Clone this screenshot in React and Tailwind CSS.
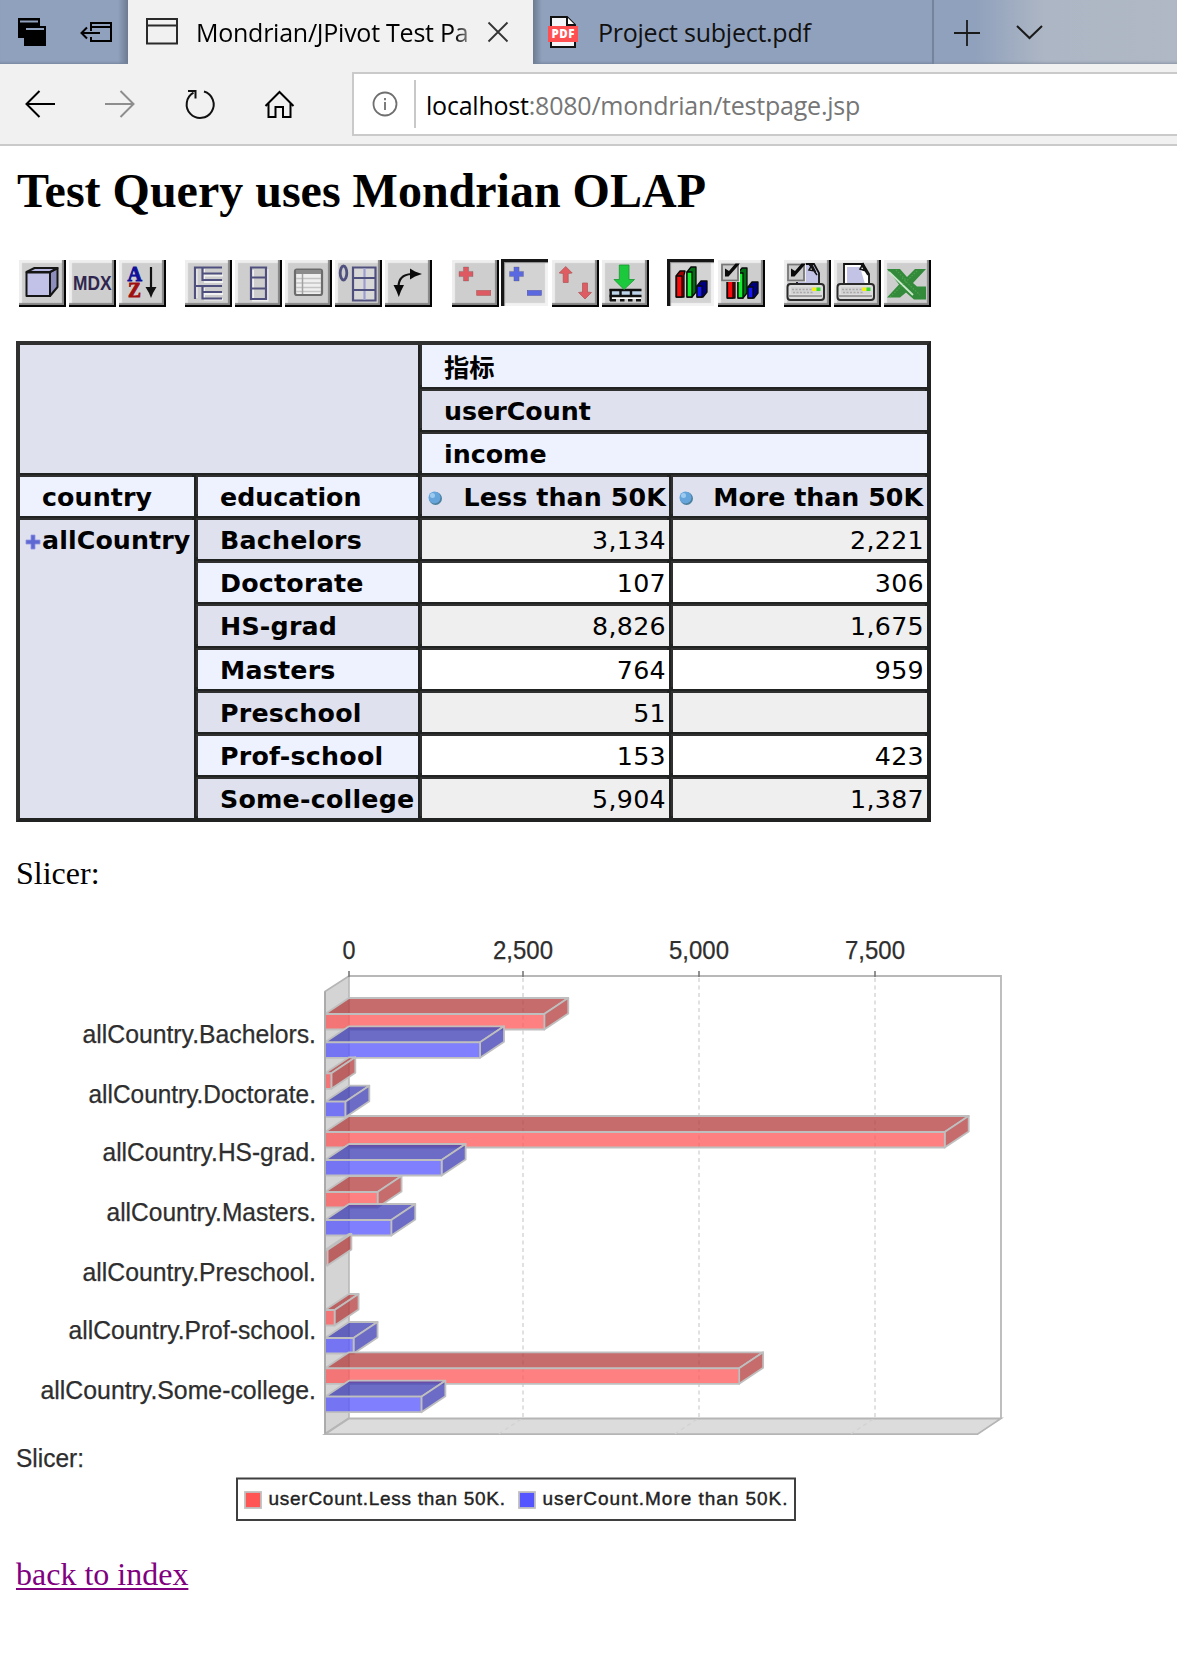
import React from "react";

const SEGOE = "font-['Open_Sans','Noto_Sans',sans-serif]";

function Bevel({ pressed, children }) {
  const look = pressed
    ? "bg-[#d3d3d3] shadow-[inset_3px_3px_0_#161616,inset_4px_4px_1px_#8a8a8a,inset_-3px_-3px_1px_#f2f2f2] -ml-px mr-px -mt-px mb-px"
    : "bg-[#cecece] shadow-[inset_-2px_-2px_0_#050505,inset_-4px_-4px_1px_#858585,inset_3px_3px_1px_#eeeeee]";
  return (
    <button className={`block w-[47px] h-[47px] ${look}`}>
      <svg width="47" height="47" viewBox="0 0 47 47" className="block">
        {children}
      </svg>
    </button>
  );
}

const NAVY = "#50507f";

function Plus({ x, y, fill }) {
  return (
    <path
      d={`M${x - 2.6} ${y - 7}h5.2v4.4h4.4v5.2h-4.4v4.4h-5.2v-4.4h-4.400v-5.2h4.400z`}
      fill={fill}
      stroke="#555"
      strokeOpacity=".35"
      strokeWidth=".8"
    />
  );
}

function Checkbox() {
  return (
    <g>
      <rect x="3" y="3" width="19" height="19" fill="#eee" />
      <rect x="4" y="4.500" width="16" height="16" fill="#ccc" stroke="#777" strokeWidth="1.8" />
      <path d="M7 8.500v8h3.500L22 3.500h-4.500L11 11z" fill="#0a0a0a" />
    </g>
  );
}

function Books() {
  return (
    <g stroke="#0a0a0a" strokeWidth="1.300" strokeLinejoin="round">
      <path d="M9 17l4-5h5l-1 4v22H9z" fill="#a30000" />
      <path d="M9.500 17h5.500v21H9.500z" fill="#ff0a0a" />
      <path d="M20 13l4-5h5v25l-4 5h-5z" fill="#006e12" />
      <path d="M20 13h5v25h-5z" fill="#0df22a" />
      <path d="M30 27l4-5h6v11l-4 5h-6z" fill="#00007d" />
      <path d="M30 27h5v11h-5z" fill="#1515ff" />
    </g>
  );
}

function Printer() {
  return (
    <g>
      <rect x="3.500" y="24" width="36.500" height="16" rx="3" fill="#dedede" stroke="#2b2b2b" strokeWidth="2" />
      <rect x="7" y="27" width="29" height="7" fill="#d3d3d3" />
      <path d="M8 29.500h20M9 32.500h20" stroke="#aaa" strokeWidth="1.500" strokeDasharray="2 1.500" />
      <rect x="28" y="27.500" width="4.500" height="3.500" fill="#f3ee18" />
      <rect x="32.500" y="27.500" width="4" height="3.500" fill="#38d930" />
      <path d="M5 36h33" stroke="#888" strokeWidth="1.500" />
    </g>
  );
}

const icons = {
  cube: (
    <g stroke="#151515" strokeWidth="2" strokeLinejoin="round">
      <path d="M31 12l7.500-4v19L31 36z" fill="#8e8ebd" />
      <path d="M7.500 12l8-4h23L31 12z" fill="#b5b5df" />
      <path d="M7.500 12.500H31V36H7.500z" fill="#c2c2e8" />
    </g>
  ),
  mdx: (
    <text x="4" y="30" fontFamily="Liberation Sans, sans-serif" fontWeight="700" fontSize="20.500" textLength="38.500" lengthAdjust="spacingAndGlyphs" fill="#2f264f">
      MDX
    </text>
  ),
  sort: (
    <g fontFamily="Liberation Serif, serif" fontWeight="700">
      <text x="8.500" y="21" fontSize="20" textLength="14.500" lengthAdjust="spacingAndGlyphs" fill="#10109a" stroke="#10109a" strokeWidth=".9">A</text>
      <text x="9" y="37" fontSize="21" textLength="13" lengthAdjust="spacingAndGlyphs" fill="#a01010" stroke="#a01010" strokeWidth=".9">Z</text>
      <path d="M32 7v22" stroke="#111" strokeWidth="2.200" />
      <path d="M26.500 27h11L34 33l-2 5-2-5z" fill="#111" />
    </g>
  ),
  tree: (
    <g fill="none" strokeWidth="2">
      <path d="M11.500 9v29M19 9v11M19 28v10M19 22h19M19 34h19M19 15.500h19M19 39.500h19" stroke="#f2f2f2" />
      <path d="M37 7.500H10V39M17.500 7.500V20H37M17.500 13.500H37M10 26h27M17.500 26v12.500H37M17.500 32H37" stroke={NAVY} strokeWidth="2.200" />
    </g>
  ),
  column: (
    <g fill="none" strokeWidth="2">
      <path d="M18 10v28M32.500 9v31.500H17" stroke="#f0f0f0" />
      <path d="M16 7.500h15v31.500H16zM16 17.500h15M16 28.500h15" stroke={NAVY} strokeWidth="2.200" />
    </g>
  ),
  sheet: (
    <g>
      <rect x="10" y="9.500" width="27" height="25.500" rx="2" fill="#efefef" stroke="#6c6c6c" strokeWidth="2.200" />
      <path d="M11 12h25" stroke="#8b8b8b" strokeWidth="4" />
      <path d="M11 18.500h25M11 23h25M11 27.500h25M11 31.500h25" stroke="#c4c4c4" strokeWidth="1.500" />
      <path d="M17.500 14v20" stroke="#a2a2a2" strokeWidth="1.500" />
    </g>
  ),
  zero: (
    <g fill="none" strokeWidth="2.200">
      <ellipse cx="8.500" cy="13" rx="3.300" ry="7" stroke={NAVY} strokeWidth="2.800" />
      <path d="M18 7.500h22.500v33H18z" fill="#d8d8d8" stroke={NAVY} />
      <path d="M29.500 8v32" stroke="#9c9cd0" />
      <path d="M18 18h22.500M18 30h22.500" stroke={NAVY} />
    </g>
  ),
  swap: (
    <g>
      <path d="M13.500 27c0-8 4-12.500 13-13" fill="none" stroke="#111" strokeWidth="2.200" />
      <path d="M25 8.500l5 3 7 2.500-7 2.500-5 3zM8.500 25h10.500l-3 6-2.200 6-2.300-6z" fill="#0a0a0a" />
    </g>
  ),
  redPlusMinus: (
    <g>
      <Plus x={14} y={14} fill="#de5a62" />
      <rect x="24.700" y="30.500" width="14" height="4.800" fill="#de5a62" stroke="#a55" strokeWidth=".6" />
    </g>
  ),
  bluePlusMinus: (
    <g>
      <Plus x={15.5} y={15} fill="#5a69df" />
      <rect x="26.300" y="31.500" width="14" height="4.800" fill="#5a69df" stroke="#55a" strokeWidth=".6" />
    </g>
  ),
  upDown: (
    <g fill="#e05c63" stroke="#a55" strokeWidth=".7">
      <path d="M13.700 6.500l6.500 6.500-4 .5v9h-5v-9l-4-.5z" />
      <path d="M33 39l-6.500-6.500 4-.5v-9h5v9l4 .5z" />
    </g>
  ),
  drill: (
    <g>
      <path d="M8 31h31v8H8z" fill="#fff" />
      <path d="M9 31h30v4H9z" fill="#bcd3ea" />
      <path d="M7.500 30h32M7.500 36h32" stroke="#111" strokeWidth="2.400" />
      <path d="M8.700 29v12M18.500 29v7M29 29v7" stroke="#111" strokeWidth="2.400" />
      <path d="M8 40.300h6M18 40.300h4.500M26 40.300h4.500M34 40.300h5" stroke="#111" strokeWidth="2.400" />
      <path d="M17.300 5h9.700v14.500h5.500L22 29.500 12 19.500h5.300z" fill="#1dc93c" stroke="#16962f" strokeWidth=".8" />
    </g>
  ),
  books: <Books />,
  booksCheck: (
    <g>
      <Books />
      <Checkbox />
    </g>
  ),
  printerCheck: (
    <g>
      <path d="M13 24V4h17l5 9v11z" fill="#c3c3e6" stroke="#111" strokeWidth="1.800" />
      <path d="M25 4l8 11M28 5l-3 5 6 1z" fill="#fff" stroke="#111" strokeWidth="1.500" />
      <Printer />
      <Checkbox />
    </g>
  ),
  printer: (
    <g>
      <path d="M10 24V4h19l6 10v10z" fill="#fff" stroke="#111" strokeWidth="1.800" />
      <path d="M13 7h13l5 17H13z" fill="#c3c3e6" />
      <path d="M27 4l7 11M29 4l-3 5 6 2z" fill="#fff" stroke="#111" strokeWidth="1.500" />
      <Printer />
    </g>
  ),
  excel: (
    <g>
      <path d="M3 9h13l7 8 8-8h11L29 23l4 3.500h9v13H30l-8-7-6 5H3l12-13z" fill="#338a3a" />
      <path d="M5 12l24 23" stroke="#c9e8cb" strokeWidth="1.800" />
      <path d="M6 37l28-27M18 18l18 17M12 10l10 10" stroke="#4ba24f" strokeWidth="1.200" strokeDasharray="1.500 1.500" />
    </g>
  ),
};

function Group({ names, pressed }) {
  return (
    <div className="flex gap-[3px]">
      {names.map((n) => (
        <Bevel key={n} pressed={n === pressed}>
          {icons[n]}
        </Bevel>
      ))}
    </div>
  );
}

function Browser() {
  return (
    <header className="w-full">
      <div className="flex h-16 bg-[linear-gradient(90deg,#90a1bd_0,#90a1bd_975px,#adb6c4_1045px,#b0b8c5_1177px)]">
        <div className="w-32 h-16 bg-[linear-gradient(90deg,transparent_118px,#6d7a90_128px)] shadow-[inset_0_-3px_3px_-2px_#74839b]">
          <svg width="128" height="64" viewBox="0 0 128 64">
            <path d="M18 18h22v20H18z" fill="#000" />
            <path d="M20 21.500h18" stroke="#90a1bd" strokeWidth="2" />
            <path d="M24 26h22v20H24z" fill="#000" />
            <path d="M26 29h18" stroke="#90a1bd" strokeWidth="2" />
            <path d="M91 31v-8h20v18H91v-4M91 27h20M82 33h18M87 27.500L81.500 33l5.500 5.500" fill="none" stroke="#000" strokeWidth="2" />
          </svg>
        </div>
        <div className="w-[405px] h-16 bg-[#f1f1f1] flex items-center">
          <svg width="33" height="27" viewBox="0 0 33 27" className="ml-[18px] -mt-px shrink-0">
            <path d="M1 1h30v24.500H1zM1 7.500h30" fill="none" stroke="#2a2a2a" strokeWidth="2" />
          </svg>
          <div className={`ml-[17px] w-[271px] overflow-hidden whitespace-nowrap text-[25px] leading-[34px] tracking-[-0.25px] text-black ${SEGOE} [mask-image:linear-gradient(90deg,#000_258px,rgba(0,0,0,0.5)_271px)]`}>
            Mondrian/JPivot Test Page
          </div>
          <svg width="22" height="22" viewBox="0 0 22 22" className="ml-5 shrink-0">
            <path d="M1.500 1.500l19 19M20.500 1.500l-19 19" stroke="#333" strokeWidth="1.800" />
          </svg>
        </div>
        <div className="w-[401px] h-16 flex items-center border-r-2 border-[#74849d] bg-[linear-gradient(90deg,#6d7a90_0,transparent_9px)] shadow-[inset_0_-3px_3px_-2px_#74839b]">
          <svg width="32" height="34" viewBox="0 0 32 34" className="ml-[14px] shrink-0">
            <path d="M4 2h16l8 8v22H4z" fill="#f4f5f9" stroke="#111" strokeWidth="2" />
            <path d="M20 2v8h8" fill="#fff" stroke="#111" strokeWidth="2" />
            <rect x="1" y="11" width="30" height="16" fill="#ff4f51" />
            <text x="4.500" y="23.300" fontFamily="Open Sans, sans-serif" fontWeight="800" fontSize="11.500" textLength="23" lengthAdjust="spacing" fill="#fff">PDF</text>
          </svg>
          <div className={`ml-[19px] whitespace-nowrap text-[25px] leading-[34px] tracking-[-0.25px] text-[#111] ${SEGOE}`}>
            Project subject.pdf
          </div>
        </div>
        <svg width="243" height="64" viewBox="934 0 243 64" className="shadow-[inset_0_-3px_3px_-2px_#8792a3]">
          <path d="M954 33h26M967 20v26" stroke="#1a1a1a" strokeWidth="1.800" />
          <path d="M1017 26l12.500 12L1042 26" fill="none" stroke="#1a1a1a" strokeWidth="2" />
        </svg>
      </div>
      <div className="flex h-[82px] bg-[#f1f1f1] border-b-2 border-[#cacaca] pt-2">
        <svg width="352" height="64" viewBox="0 72 352 64" className="shrink-0" fill="none" strokeWidth="2">
          <path d="M55 104H27M39.500 91L26.500 104l13 13" stroke="#000" />
          <path d="M105 104h28M120.500 91l13 13-13 13" stroke="#8d8d8d" />
          <path d="M204 91.500a13.500 13.500 0 1 1-10.500 1.200M188 91h7.500v7.500" stroke="#111" />
          <path d="M265.500 106L279.500 92l14 14M268.500 103.500V117h7v-10h7.500v10h7.500v-13.500" stroke="#000" />
        </svg>
        <div className="flex-1 h-16 bg-white border-2 border-r-0 border-[#cacaca] flex items-center">
          <svg width="26" height="26" viewBox="0 0 26 26" className="ml-[18px] shrink-0" fill="none" stroke="#6f6f6f">
            <circle cx="13" cy="13" r="11.500" strokeWidth="1.800" />
            <path d="M13 11v8M13 7v2.200" strokeWidth="1.800" />
          </svg>
          <div className="ml-4 w-0.5 h-12 bg-[#c8c8c8]" />
          <div className={`ml-[10px] pt-px whitespace-nowrap text-[25px] leading-[34px] tracking-[-0.22px] text-[#767676] ${SEGOE}`}>
            <span className="text-black">localhost</span>:8080/mondrian/testpage.jsp
          </div>
        </div>
      </div>
    </header>
  );
}

const LIGHT = "bg-[#eef2ff]";
const DARK = "bg-[#dfe2ee]";

function Cell({ className = "", children }) {
  return (
    <div className={`flex items-center whitespace-nowrap shadow-[-2px_-2px_0_#303030] ${className}`}>
      {children}
    </div>
  );
}

function Dot() {
  return (
    <svg width="16" height="16" viewBox="0 0 16 16" className="ml-[5px]">
      <circle cx="8.500" cy="8.500" r="6.500" fill="#4b7f9d" />
      <circle cx="7.500" cy="7.500" r="6" fill="#66a4dc" />
      <circle cx="5.500" cy="5.500" r="2.500" fill="#9dcbf0" />
    </svg>
  );
}

const rows = [
  ["Bachelors", "3,134", "2,221"],
  ["Doctorate", "107", "306"],
  ["HS-grad", "8,826", "1,675"],
  ["Masters", "764", "959"],
  ["Preschool", "51", ""],
  ["Prof-school", "153", "423"],
  ["Some-college", "5,904", "1,387"],
];

function PivotTable() {
  return (
    <div className="ml-4 mt-[34px] w-[915px] h-[481px] bg-[#212323] border-4 border-t-[#303030] border-l-[#303030] border-r-[#212323] border-b-[#212323] grid gap-1 grid-cols-[174px_220px_247px_254px] grid-rows-[42px_39px_39px_39px_39px_39px_40px_39px_39px_39px_39px] text-[25.3px] leading-[30px] text-black font-['DejaVu_Sans','Noto_Sans_CJK_SC',sans-serif]">
      <Cell className={`col-span-2 row-span-3 ${DARK}`} />
      <Cell className={`col-span-2 pl-[22px] pt-[5px] font-bold ${LIGHT}`}>指标</Cell>
      <Cell className={`col-span-2 pl-[22px] pt-0.5 font-bold ${DARK}`}>userCount</Cell>
      <Cell className={`col-span-2 pl-[22px] pt-0.5 font-bold ${LIGHT}`}>income</Cell>
      <Cell className={`pl-[22px] pt-0.5 font-bold tracking-[0.1px] ${LIGHT}`}>country</Cell>
      <Cell className={`pl-[22px] pt-0.5 font-bold ${LIGHT}`}>education</Cell>
      <Cell className={`justify-between pr-[3px] pt-0.5 font-bold tracking-[0.12px] ${DARK}`}><Dot />Less than 50K</Cell>
      <Cell className={`justify-between pr-[4px] pt-0.5 font-bold ${DARK}`}><Dot />More than 50K</Cell>
      <Cell className={`row-span-7 items-start! pt-[6px] font-bold tracking-[0.1px] ${DARK}`}>
        <svg width="16" height="16" viewBox="0 0 16 16" className="ml-[5px] mt-2 mr-px shrink-0">
          <path d="M6 1h4v5h5v4h-5v5H6v-5H1V6h5z" fill="#5f69d2" stroke="#8d95e2" strokeWidth=".8" />
        </svg>
        allCountry
      </Cell>
      {rows.map(([name, less, more], i) => (
        <React.Fragment key={name}>
          <Cell className={`pl-[22px] pt-0.5 font-bold tracking-[0.22px] ${i % 2 ? LIGHT : DARK}`}>{name}</Cell>
          <Cell className={`justify-end pr-[3px] pt-0.5 tracking-[0.3px] ${i % 2 ? "bg-white" : "bg-[#efefef]"}`}>{less}</Cell>
          <Cell className={`justify-end pr-[3px] pt-0.5 tracking-[0.3px] ${i % 2 ? "bg-white" : "bg-[#efefef]"}`}>{more}</Cell>
        </React.Fragment>
      ))}
    </div>
  );
}

const UNIT = 0.07035;
// [value, front top y, series]
const bars = [
  [3134, 1014, 0], [2221, 1042.3, 1],
  [107, 1073.3, 0], [306, 1101.7, 1],
  [8826, 1132, 0], [1675, 1160, 1],
  [764, 1192, 0], [959, 1220, 1],
  [51, 1250, 0],
  [153, 1310, 0], [423, 1338, 1],
  [5904, 1368.3, 0], [1387, 1396.7, 1],
];
// [education, left x, baseline y]
const labels = [
  ["Bachelors", 83, 1043], ["Doctorate", 89, 1102.7], ["HS-grad", 103, 1160.7],
  ["Masters", 107, 1221], ["Preschool", 83, 1281], ["Prof-school", 69, 1339], ["Some-college", 41, 1399],
];
const ticks = [["0", 349, 13], ["2,500", 523, 60], ["5,000", 699, 60], ["7,500", 875, 60]];

function Bar({ v, y, series }) {
  const x = 325;
  const w = v * UNIT - 1.2;
  const front = series ? "#5555ff" : "#ff5555";
  const side = series ? "#3b3bb3" : "#b33b3b";
  return (
    <g stroke="#bfbfbf" strokeWidth="1.800" strokeLinejoin="round" fillOpacity=".75">
      <path d={`M${x} ${y}l24 -16h${w}l-24 16z`} fill={side} />
      <path d={`M${x + w} ${y}l24 -16v15.5l-24 16z`} fill={side} />
      <path d={`M${x} ${y}h${w}v15.500h${-w}z`} fill={front} />
    </g>
  );
}

function Chart() {
  return (
    <svg width="1177" height="620" viewBox="0 920 1177 620" className="block" fontFamily="Liberation Sans, Arial, sans-serif" fill="#2e2e2e">
      <path d="M325 991.500L349 976v442l-24 15.700z" fill="#d4d4d4" stroke="#b5b5b5" strokeWidth="1.500" />
      <path d="M325 1434.200L349 1418.500h652L977.500 1434.200z" fill="#dcdcdc" stroke="#b5b5b5" strokeWidth="1.800" />
      <path d="M349 976h652v442.500" fill="none" stroke="#b8b8b8" strokeWidth="1.800" />
      {ticks.map(([t, x, w], i) => (
        <g key={t}>
          <path d={`M${x} 971v6`} stroke="#777" strokeWidth="1.600" />
          {i > 0 && <path d={`M${x} 978V1418l-24 15.700`} fill="none" stroke="#d2d2d2" strokeWidth="1.300" strokeDasharray="4 3.500" />}
          <text x={x - w / 2} y="959" fontSize="25" textLength={w} lengthAdjust="spacingAndGlyphs" stroke="#2e2e2e" strokeWidth=".25">{t}</text>
        </g>
      ))}
      {bars.map(([v, y, s]) => (
        <Bar key={y} v={v} y={y} series={s} />
      ))}
      <path d="M325 991.500v442" stroke="#a9a9a9" strokeWidth="1.800" />
      <g stroke="#2e2e2e" strokeWidth=".25" fontSize="25">
        {labels.map(([t, x, y]) => (
          <text key={t} x={x - 0.5} y={y} textLength={316.500 - x} lengthAdjust="spacingAndGlyphs">
            allCountry.{t}.
          </text>
        ))}
        <text x="16" y="1466.500" textLength="68" lengthAdjust="spacingAndGlyphs">Slicer:</text>
      </g>
      <rect x="237" y="1478.500" width="558" height="41.500" fill="#fff" stroke="#3f3f3f" strokeWidth="2" />
      <rect x="245" y="1492" width="16" height="16" fill="#ff5555" stroke="#c0c0c0" strokeWidth="1.800" />
      <rect x="519" y="1492" width="16" height="16" fill="#5555ff" stroke="#c0c0c0" strokeWidth="1.800" />
      <g fontSize="19" fill="#222" stroke="#222" strokeWidth=".4">
        <text x="268.500" y="1505.300" textLength="236.500" lengthAdjust="spacing">userCount.Less than 50K.</text>
        <text x="542.500" y="1505.300" textLength="245" lengthAdjust="spacing">userCount.More than 50K.</text>
      </g>
    </svg>
  );
}

export default function App() {
  return (
    <div className="w-[1177px] h-[1662px] overflow-hidden bg-white font-['Liberation_Serif',serif] text-black">
      <Browser />
      <h1 className="ml-[17px] mt-[17px] h-14 leading-[56px] text-[48px] font-bold whitespace-nowrap">Test Query uses Mondrian OLAP</h1>
      <div className="ml-[19px] mt-[41px] flex gap-[19px]">
        <Group names={["cube", "mdx", "sort"]} />
        <Group names={["tree", "column", "sheet", "zero", "swap"]} />
        <div className="ml-px">
          <Group names={["redPlusMinus", "bluePlusMinus", "upDown", "drill"]} pressed="bluePlusMinus" />
        </div>
        <Group names={["books", "booksCheck"]} pressed="books" />
        <Group names={["printerCheck", "printer", "excel"]} />
      </div>
      <PivotTable />
      <p className="ml-4 mt-[33px] h-9 leading-9 text-[32px]">Slicer:</p>
      <div className="mt-[29px]">
        <Chart />
      </div>
      <a className="ml-4 mt-4 block w-fit leading-9 text-[32px] text-[#800080] underline decoration-2 underline-offset-[3px]">back to index</a>
    </div>
  );
}
